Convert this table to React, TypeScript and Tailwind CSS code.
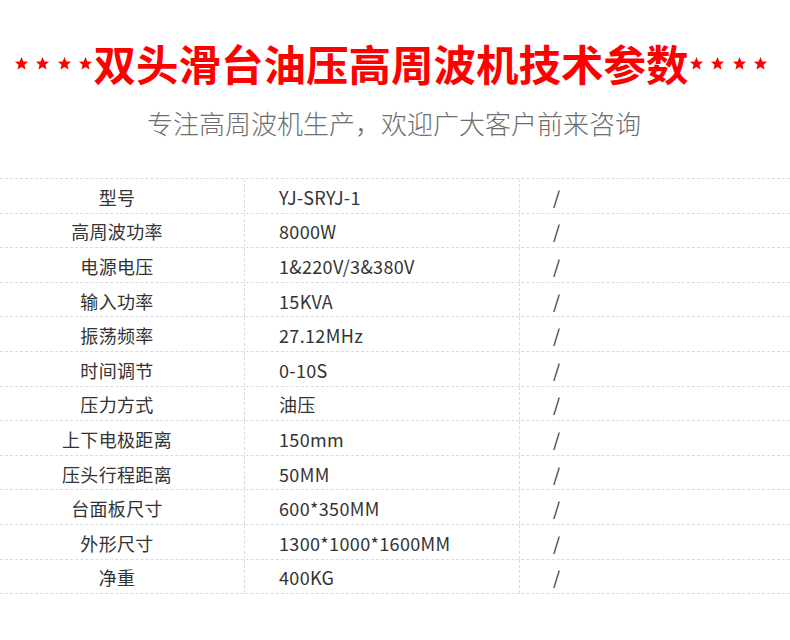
import React from "react";

const rows: [string, string][] = [
  ["型号", "YJ-SRYJ-1"],
  ["高周波功率", "8000W"],
  ["电源电压", "1&220V/3&380V"],
  ["输入功率", "15KVA"],
  ["振荡频率", "27.12MHz"],
  ["时间调节", "0-10S"],
  ["压力方式", "油压"],
  ["上下电极距离", "150mm"],
  ["压头行程距离", "50MM"],
  ["台面板尺寸", "600*350MM"],
  ["外形尺寸", "1300*1000*1600MM"],
  ["净重", "400KG"],
];

function Star() {
  return (
    <svg width="15" height="15" viewBox="0 0 24 24" className="shrink-0">
      <polygon
        points="12,1.5 14.9,8.6 22.5,9.2 16.7,14.1 18.5,21.6 12,17.6 5.5,21.6 7.3,14.1 1.5,9.2 9.1,8.6"
        fill="#ff0000"
      />
    </svg>
  );
}

function Stars() {
  return (
    <div className="flex items-center gap-[6.5px]">
      <Star />
      <Star />
      <Star />
      <Star />
    </div>
  );
}

export default function App() {
  const font = { fontFamily: '"Noto Sans CJK SC", "Noto Sans", sans-serif' };
  return (
    <div className="w-[790px] h-[640px] bg-white" style={font}>
      <div className="pt-[42px] flex items-center justify-center pr-[8px]">
        <Stars />
        <div className="h-[42px] leading-[42px] text-[42.5px] font-bold text-[#ff0000] whitespace-nowrap">
          双头滑台油压高周波机技术参数
        </div>
        <Stars />
      </div>
      <div className="mt-[26px] h-[26px] leading-[26px] text-center text-[26px] font-light text-[#6e6e6e] whitespace-nowrap pr-[2px]">
        专注高周波机生产，欢迎广大客户前来咨询
      </div>
      <div className="mt-[42px] border-t border-dashed border-[#dcdcdc]">
        {rows.map(([k, v], i) => (
          <div
            key={i}
            className="flex h-[34.6px] border-b border-dashed border-[#dcdcdc] text-[18px] tracking-[0.35px] text-[#333333]"
          >
            <div className="w-[244px] flex items-center justify-center pr-[10px] pt-[3px]">{k}</div>
            <div className="w-[275px] flex items-center pl-[34px] pt-[3px] border-l border-dashed border-[#dcdcdc]">
              {v}
            </div>
            <div className="flex-1 flex items-center pl-[33px] pt-[3px] border-l border-dashed border-[#dcdcdc]">
              /
            </div>
          </div>
        ))}
      </div>
    </div>
  );
}
